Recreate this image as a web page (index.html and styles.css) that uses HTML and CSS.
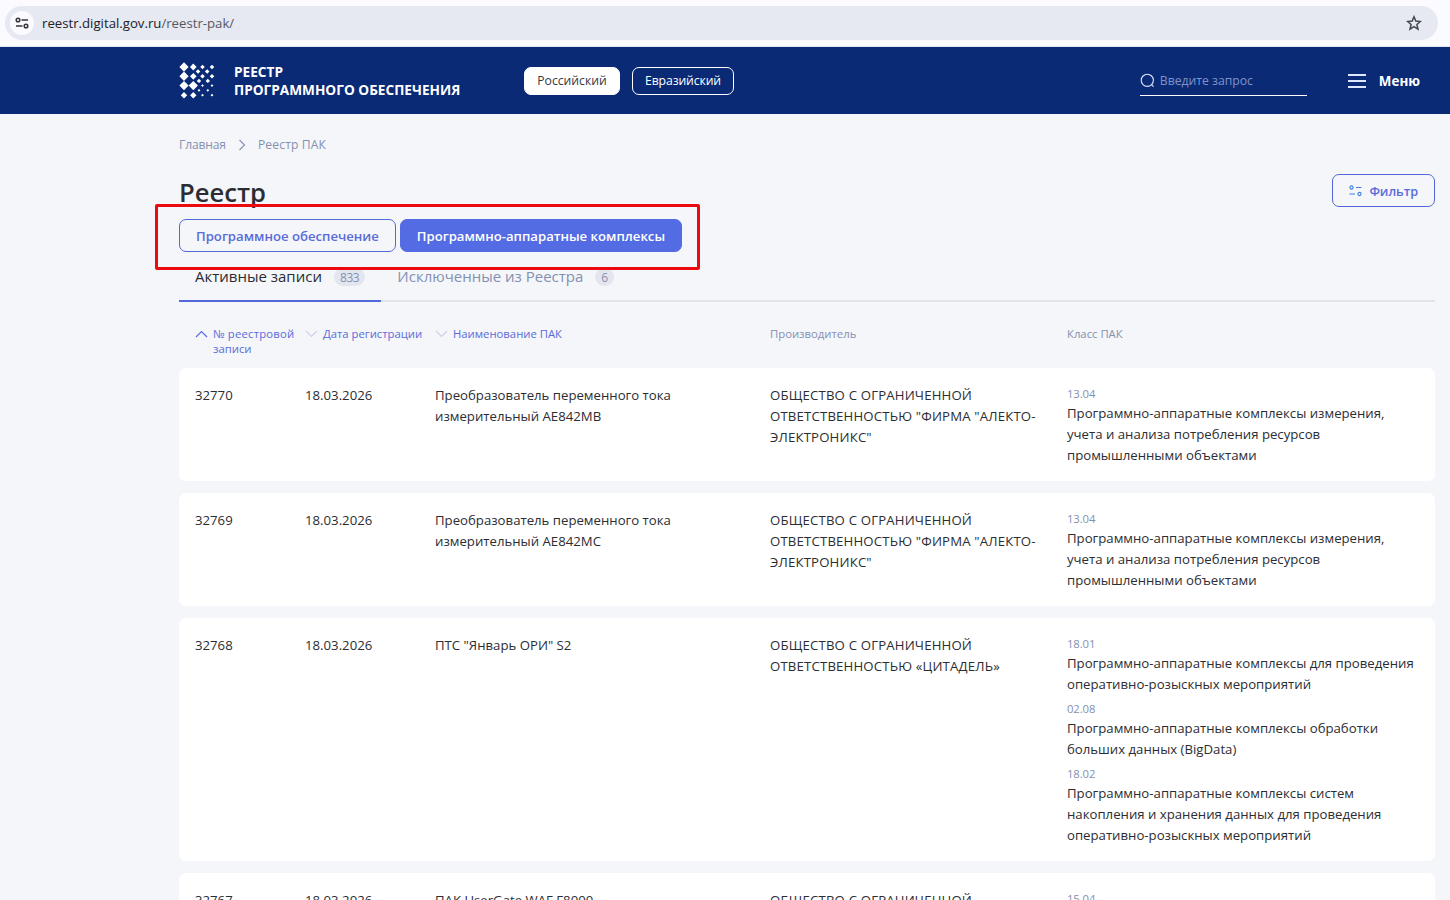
FILE: index.html
```
<!DOCTYPE html>
<html lang="ru">
<head>
    <meta charset="UTF-8" />
    <title>Реестр ПАК</title>
    <link rel="stylesheet" href="styles.css">
</head>
<body>
    <div class="browser-bar">
        <div class="address">
            <span class="site-info">
                <svg width="14" height="14" viewBox="0 0 14 14" fill="none" stroke="#33363b" stroke-width="1.5"><circle cx="3" cy="4" r="1.8"/><path d="M6.5 4H13M1 10h6.5"/><circle cx="11" cy="10" r="1.8"/></svg>
            </span>
            <span class="url">reestr.digital.gov.ru<span>/reestr-pak/</span></span>
            <svg class="star" width="16" height="16" viewBox="0 0 16 16" fill="none" stroke="#44474d" stroke-width="1.5"><path d="M8 1.8l1.8 4.3 4.6.4-3.5 3 1.1 4.6L8 11.7l-4 2.4 1.1-4.6-3.5-3 4.6-.4z"/></svg>
        </div>
    </div>
    <header class="header">
        <a class="brand">
            <svg width="37" height="37" viewBox="0 0 37 37" fill="#fff">
                <path d="M5 .3L9.6 5 5 9.7.4 5zM5 9.6l4.6 4.7L5 19 .4 14.3zM5 18.9l4.6 4.7L5 28.3.4 23.600zM5 30l3.2 3.200L5 36.400 1.800 33.200z"/>
                <path d="M14.300 1.600L17.600 5l-3.300 3.400L11 5zM14.300 10.900l3.300 3.400-3.300 3.400-3.300-3.400zM14.300 18.900l4.600 4.700-4.600 4.700-4.600-4.700zM14.300 30l3.200 3.200-3.200 3.200-3.200-3.200z"/>
                <path d="M23.500 2.700L25.800 5l-2.300 2.300L21.200 5zM33 2.700L35.300 5 33 7.300 30.700 5zM19 7.200l2.300 2.300-2.300 2.300-2.300-2.300zM28.200 7.200l2.300 2.300-2.300 2.300-2.300-2.300zM23.500 12l2.300 2.300-2.300 2.300-2.300-2.300zM33 12l2.300 2.300-2.300 2.300-2.300-2.300zM20 16.700l2.200 2.200-2.200 2.200-2.200-2.200zM28.800 16.700l2.200 2.200-2.200 2.200-2.200-2.200z"/>
                <path d="M23.500 22.200l1.400 1.400-1.400 1.400-1.400-1.400zM33 22.200l1.400 1.400L33 25l-1.400-1.400zM20 26.900l1.400 1.400-1.400 1.400-1.400-1.400zM28.800 26.900l1.400 1.400-1.400 1.400-1.400-1.400zM23.500 31.800l1.400 1.400-1.400 1.400-1.400-1.400zM33 31.800l1.400 1.400-1.400 1.400-1.400-1.400z"/>
            </svg>
            <span>РЕЕСТР<br>ПРОГРАММНОГО ОБЕСПЕЧЕНИЯ</span>
        </a>
        <nav class="region">
            <a class="region-link active">Российский</a>
            <a class="region-link">Евразийский</a>
        </nav>
        <div class="search">
            <svg width="15" height="15" viewBox="0 0 15 15" fill="none" stroke="#dfe6ff" stroke-width="1.1"><circle cx="7.3" cy="7.3" r="6.1"/><path d="M11.6 11.6l2 2"/></svg>
            <span>Введите запрос</span>
        </div>
        <div class="menu">
            <i></i>
            <span>Меню</span>
        </div>
    </header>

    <main class="content">
        <div class="crumbs">
            <a>Главная</a>
            <svg width="8" height="12" viewBox="0 0 8 12" fill="none" stroke="#8b96b5" stroke-width="1.2"><path d="M1.5 1l5 5-5 5"/></svg>
            <span>Реестр ПАК</span>
        </div>
        <div class="title-row">
            <h1>Реестр</h1>
            <a class="btn filter">
                <svg width="13" height="12" viewBox="0 0 13 12" fill="none" stroke="#3d7fdc" stroke-width="1.1"><circle cx="2.5" cy="2.5" r="1.6"/><path d="M7 2.5h5.5M.5 9H6"/><circle cx="10.5" cy="9" r="1.6"/></svg>
                Фильтр
            </a>
        </div>
        <div class="types">
            <a class="btn">Программное обеспечение</a>
            <a class="btn primary">Программно-аппаратные комплексы</a>
            <div class="mark"></div>
        </div>
        <div class="tabs">
            <a class="tab active">Активные записи <b>833</b></a>
            <a class="tab">Исключенные из Реестра <b>6</b></a>
        </div>

        <div class="row head">
            <div class="sort up"><svg width="13" height="8" viewBox="0 0 13 8"><path d="M1 7l5.500-5.500L12 7"/></svg><span><span class="num">№ реестровой</span><br>записи</span></div>
            <div class="sort"><svg width="13" height="8" viewBox="0 0 13 8"><path d="M1 1l5.500 5.500L12 1"/></svg><span>Дата регистрации</span></div>
            <div class="sort"><svg width="13" height="8" viewBox="0 0 13 8"><path d="M1 1l5.500 5.500L12 1"/></svg><span>Наименование ПАК</span></div>
            <div>Производитель</div>
            <div>Класс ПАК</div>
        </div>

        <div class="row card">
            <div>32770</div>
            <div>18.03.2026</div>
            <div>Преобразователь переменного тока<br>измерительный АЕ842МВ</div>
            <div class="maker">ОБЩЕСТВО С ОГРАНИЧЕННОЙ<br>ОТВЕТСТВЕННОСТЬЮ "ФИРМА "АЛЕКТО-<br>ЭЛЕКТРОНИКС"</div>
            <div class="classes">
                <div><small>13.04</small>Программно-аппаратные комплексы измерения,<br>учета и анализа потребления ресурсов<br>промышленными объектами</div>
            </div>
        </div>
        <div class="row card">
            <div>32769</div>
            <div>18.03.2026</div>
            <div>Преобразователь переменного тока<br>измерительный АЕ842МС</div>
            <div class="maker">ОБЩЕСТВО С ОГРАНИЧЕННОЙ<br>ОТВЕТСТВЕННОСТЬЮ "ФИРМА "АЛЕКТО-<br>ЭЛЕКТРОНИКС"</div>
            <div class="classes">
                <div><small>13.04</small>Программно-аппаратные комплексы измерения,<br>учета и анализа потребления ресурсов<br>промышленными объектами</div>
            </div>
        </div>
        <div class="row card">
            <div>32768</div>
            <div>18.03.2026</div>
            <div>ПТС "Январь ОРИ" S2</div>
            <div class="maker">ОБЩЕСТВО С ОГРАНИЧЕННОЙ<br>ОТВЕТСТВЕННОСТЬЮ «ЦИТАДЕЛЬ»</div>
            <div class="classes">
                <div><small>18.01</small>Программно-аппаратные комплексы для проведения<br>оперативно-розыскных мероприятий</div>
                <div><small>02.08</small>Программно-аппаратные комплексы обработки<br>больших данных (BigData)</div>
                <div><small>18.02</small>Программно-аппаратные комплексы систем<br>накопления и хранения данных для проведения<br>оперативно-розыскных мероприятий</div>
            </div>
        </div>
        <div class="row card">
            <div>32767</div>
            <div>18.03.2026</div>
            <div>ПАК UserGate WAF F8000</div>
            <div class="maker">ОБЩЕСТВО С ОГРАНИЧЕННОЙ</div>
            <div class="classes">
                <div><small>15.04</small></div>
            </div>
        </div>
    </main>
</body>
</html>
```
FILE: styles.css
```
*{
    margin: 0;
    padding: 0;
    box-sizing: border-box;
}
body{
    height: 900px;
    overflow: hidden;
    background-color: #f4f6fa;
    font-family: "Open Sans", "Noto Sans", sans-serif;
    font-size: 13.2px;
    line-height: 21px;
    color: #2b2d33;
}
svg{
    display: block;
    flex: none;
}
.browser-bar{
    height: 47px;
    padding: 6px 12px 0 5px;
    background-color: #fafaff;
    border-bottom: 1px solid #e4e7f2;
}
.address{
    display: flex;
    align-items: center;
    height: 34px;
    padding: 0 16px 0 5px;
    border-radius: 17px;
    background-color: #e6e8f2;
}
.site-info{
    display: flex;
    align-items: center;
    justify-content: center;
    width: 24px;
    height: 24px;
    border-radius: 50%;
    background-color: #fafaff;
}
.url{
    margin-left: 8px;
    font-size: 13.2px;
    color: #202226;
}
.url span{
    color: #55585f;
}
.star{
    margin-left: auto;
}

/* header */
.header{
    display: flex;
    align-items: center;
    height: 67px;
    padding: 0 30px 0 179px;
    background-color: #0a2a75;
    color: #fff;
}
.brand{
    display: flex;
    align-items: center;
    gap: 18px;
    width: 345px;
    font-size: 13.65px;
    font-weight: 700;
    line-height: 18px;
}
.region{
    display: flex;
    gap: 12px;
}
.region-link{
    width: 96px;
    height: 28px;
    border: 1px solid #fff;
    border-radius: 7px;
    font-size: 12.2px;
    line-height: 25px;
    text-align: center;
}
.region-link.active{
    background-color: #fff;
    color: #36383e;
}
.region-link:last-child{
    width: 102px;
    letter-spacing: -.1px;
}
.search{
    display: flex;
    align-items: center;
    gap: 5px;
    width: 167px;
    height: 31px;
    margin-left: auto;
    border-bottom: 1px solid #fff;
    font-size: 12.2px;
    color: #8093c8;
}
.menu{
    display: flex;
    align-items: center;
    gap: 13px;
    margin-left: 41px;
    font-size: 13.4px;
    font-weight: 700;
}
.menu span{
    padding-top: 2px;
}
.menu i{
    width: 18px;
    height: 14px;
    border-top: 2px solid #dfe6ff;
    border-bottom: 2px solid #dfe6ff;
    background: linear-gradient(#dfe6ff, #dfe6ff) center / 100% 2px no-repeat;
}

/* content */
.content{
    padding: 20px 15px 0 179px;
}
.crumbs{
    display: flex;
    align-items: center;
    gap: 12px;
    font-size: 12.1px;
    color: #8791af;
}
.crumbs a{
    letter-spacing: -.15px;
}
.crumbs span{
    letter-spacing: .15px;
}
.title-row{
    display: flex;
    justify-content: space-between;
    height: 64px;
    padding-top: 19px;
}
h1{
    font-size: 25.6px;
    font-weight: 600;
    line-height: 38px;
    color: #2b2d33;
}
.btn{
    display: flex;
    align-items: center;
    height: 33px;
    padding: 2px 16px 0;
    border: 1px solid #5267d9;
    border-radius: 7px;
    font-size: 13.15px;
    font-weight: 600;
    white-space: nowrap;
    color: #5a6bd8;
}
.filter{
    gap: 7px;
    font-size: 12.7px;
    letter-spacing: -.05px;
}
.filter svg{
    margin-top: -2px;
}
.primary{
    border-color: #536be3;
    background-color: #536be3;
    color: #fff;
}
.types{
    position: relative;
    display: flex;
    gap: 4px;
}
.mark{
    position: absolute;
    left: -24px;
    top: -15px;
    width: 545px;
    height: 66px;
    border: 3px solid #ea0a10;
    border-radius: 2px;
}
.tabs{
    display: flex;
    height: 50px;
    border-bottom: 2px solid #e1e4ec;
}
.tab{
    display: flex;
    gap: 12px;
    height: 50px;
    padding: 14px 16px 0;
    font-size: 15px;
    color: #8490b0;
}
.tab.active{
    border-bottom: 2px solid #5267d9;
    color: #2b2d33;
}
.tab b{
    height: 18px;
    margin-top: 2px;
    padding: 0 6px;
    border-radius: 9px;
    background-color: #e4e6ef;
    font-size: 12px;
    font-weight: 400;
    line-height: 19px;
    letter-spacing: -.4px;
    color: #8490b0;
}
.row{
    display: grid;
    grid-template-columns: 110px 130px 335px 297px 1fr;
    padding: 17px 16px 15px;
}
.row > div{
    white-space: nowrap;
}
.head{
    height: 66px;
    padding-top: 24px;
    font-size: 11.3px;
    line-height: 15px;
    color: #8490b0;
}
.sort{
    display: flex;
    gap: 5px;
    color: #5a6bd8;
}
.sort svg{
    margin-top: 4px;
    fill: none;
    stroke: #ccd3e8;
    stroke-width: 1.2;
}
.sort.up svg{
    stroke: #5a6bd8;
}
.num{
    letter-spacing: .2px;
}
.card{
    margin-bottom: 12px;
    border-radius: 7px;
    background-color: #fff;
}
.maker{
    letter-spacing: .17px;
}
.classes{
    display: flex;
    flex-direction: column;
    gap: 5px;
}
.classes small{
    display: block;
    height: 18px;
    font-size: 11.3px;
    line-height: 17px;
    letter-spacing: -.1px;
    color: #8490b0;
}
```
